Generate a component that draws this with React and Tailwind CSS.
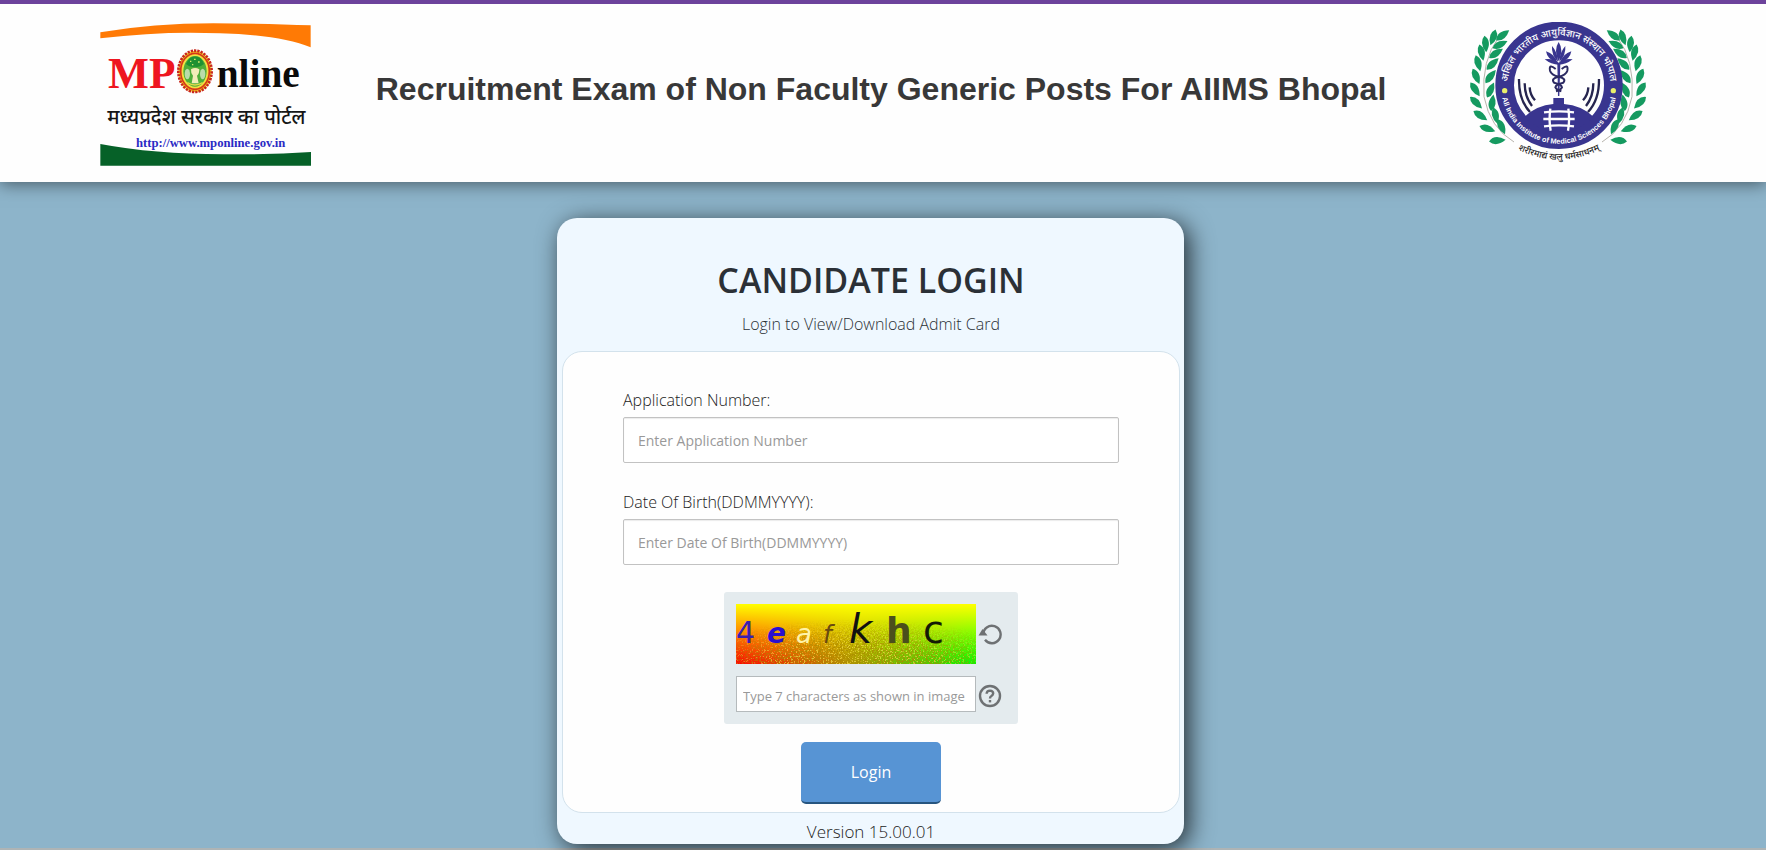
const DEVA = '"Noto Sans Devanagari", "Lohit Devanagari", "Noto Sans", sans-serif';

// x, y, rotation of each leaf on the left branch; the right one is mirrored
const LEAVES = [
  [188, 106, -38], [159, 112, 108], [180, 134, -26], [136, 132, 84], [168, 160, -34],
  [124, 158, 76], [158, 192, -44], [114, 190, 74], [152, 230, -52], [108, 229, 66],
  [152, 270, -66], [105, 268, 56], [157, 308, -82], [108, 308, 44], [166, 347, 76],
  [121, 347, 34], [184, 380, 64], [142, 386, 18], [172, 422, -6],
];

function Branch() {
  return (
    <g>
      <path d="M222 426 Q150 384 132 290 Q124 180 176 112" fill="none" stroke="#a8a39a" strokeWidth="2.5" />
      {LEAVES.map(([x, y, r]) => (
        <path key={`${x}-${y}`} d="M-25 0 Q-6 -22 25 0 Q-6 20 -25 0Z" fill="#159a60" transform={`translate(${x} ${y}) rotate(${r})`} />
      ))}
    </g>
  );
}

function MpOnlineLogo() {
  return (
    <svg viewBox="60 66 633 432" className="h-[144px] w-[211px]" role="img" aria-label="MPOnline">
      <path d="M61 97 Q220 70 400 70 Q560 70 692 76 V142 Q600 104 420 100 Q250 92 61 115Z" fill="#ff7a05" />
      <path d="M61 432 Q220 462 430 463 Q570 464 693 456 V497 H61Z" fill="#066128" />
      <text x="84" y="265" fontSize="130" fontWeight="700" fill="#ee1620" fontFamily='"Liberation Serif", serif'>MP</text>
      <text x="410" y="261" fontSize="118" fontWeight="700" fill="#0a0a0a" fontFamily='"Liberation Serif", serif'>nline</text>
      <ellipse cx="345" cy="214" rx="50" ry="62" fill="#f4d21f" stroke="#c9281c" strokeWidth="8" strokeDasharray="7 3" />
      <ellipse cx="345" cy="214" rx="43" ry="54" fill="none" stroke="#d5351d" strokeWidth="5" />
      <ellipse cx="345" cy="214" rx="37" ry="48" fill="#4fae3a" stroke="#f2e04c" strokeWidth="4" />
      <path d="M318 192 Q330 168 345 170 Q362 168 372 192 Q358 204 345 200 Q330 204 318 192Z" fill="#1f9132" />
      <path d="M330 184 h4 M342 178 h5 M354 186 h5 M336 194 h4" stroke="#d6e86a" strokeWidth="4" />
      <ellipse cx="322" cy="222" rx="8" ry="16" fill="#b9dcab" />
      <ellipse cx="368" cy="222" rx="8" ry="16" fill="#b9dcab" />
      <path d="M333 208 Q345 200 358 208 Q358 222 351 227 L356 250 H335 L339 227 Q332 220 333 208Z" fill="#f3ecb8" />
      <path d="M322 248 Q345 262 368 248" fill="none" stroke="#e0d94a" strokeWidth="4" />
      <text x="379" y="371" textAnchor="middle" fontSize="60" fontWeight="500" fill="#161616" fontFamily={DEVA}>मध्यप्रदेश सरकार का पोर्टल</text>
      <text x="392" y="441" textAnchor="middle" fontSize="38" fontWeight="700" fill="#2a2ac4" fontFamily='"Liberation Serif", serif'>http://www.mponline.gov.in</text>
    </svg>
  );
}

function AiimsLogo() {
  return (
    <svg viewBox="33 66 645 435" className="h-[145px] w-[215px]" role="img" aria-label="AIIMS Bhopal">
      <defs>
        <path id="ring-top" d="M202 262 A155 155 0 0 1 512 262" />
        <path id="ring-bottom" d="M184 276 A174 174 0 0 0 530 276" />
        <path id="motto" d="M220 442 Q357 516 494 442" />
      </defs>
      <Branch />
      <g transform="translate(708 0) scale(-1 1)">
        <Branch />
      </g>
      <circle cx="357" cy="256" r="163" fill="#fefefe" stroke="#39358f" strokeWidth="56" />
      <path d="M254 350 Q290 316 340 312 V294 H372 V312 Q424 316 460 350 Q420 395 357 395 Q294 395 254 350Z" fill="#39358f" />
      <g fill="none" stroke="#fefefe" strokeWidth="7">
        <path d="M331 326 Q326 360 332 392 M385 326 Q390 360 384 392" />
        <path d="M312 337 Q357 331 402 337 M310 357 H404 M312 379 Q357 373 402 379" />
      </g>
      <g fill="none" stroke="#26254f" strokeWidth="7">
        <path d="M237 237 Q236 300 270 336 M254 250 Q254 290 276 318 M269 262 Q270 284 285 301" />
        <path d="M477 237 Q478 300 444 336 M460 250 Q460 290 438 318 M445 262 Q444 284 429 301" />
      </g>
      <g fill="#39358f">
        <path d="M356 126 Q372 150 356 184 Q340 150 356 126Z" />
        <path d="M336 138 Q354 158 354 186 Q334 166 336 138Z M376 138 Q358 158 358 186 Q378 166 376 138Z" />
        <path d="M318 154 Q344 162 352 188 Q322 180 318 154Z M394 154 Q368 162 360 188 Q390 180 394 154Z" />
        <path d="M314 178 Q338 174 356 188 Q374 174 398 178 Q378 194 356 194 Q334 194 314 178Z" />
        <path d="M352 192 H361 L358 288 H354Z" />
      </g>
      <g fill="none" stroke="#2c2a62" strokeWidth="6">
        <path d="M347 207 Q326 190 330 212 Q334 226 357 230 Q380 236 370 248 Q348 252 346 262 Q350 270 364 274" />
        <path d="M365 207 Q386 190 382 212 Q378 226 355 230 Q332 236 342 248 Q364 252 366 262 Q362 270 348 274" />
      </g>
      <g fill="#fefefe">
        <text fontSize="29" fontWeight="500" fontFamily={DEVA} textAnchor="middle">
          <textPath href="#ring-top" startOffset="50%">अखिल भारतीय आयुर्विज्ञान संस्थान भोपाल</textPath>
        </text>
        <text fontSize="22" fontWeight="700" fontFamily='"Liberation Sans", sans-serif' textAnchor="middle">
          <textPath href="#ring-bottom" startOffset="50%">All India Institute of Medical Sciences Bhopal</textPath>
        </text>
      </g>
      <circle cx="194" cy="272" r="8" fill="#e9ef6b" />
      <circle cx="520" cy="272" r="8" fill="#e9ef6b" />
      <text fontSize="27" fontWeight="500" fill="#222" fontFamily={DEVA} textAnchor="middle">
        <textPath href="#motto" startOffset="50%">शरीरमाद्यं खलु धर्मसाधनम्</textPath>
      </text>
    </svg>
  );
}

function CaptchaImage() {
  return (
    <svg viewBox="0 0 240 60" className="h-[60px] w-[240px]" role="img" aria-label="Captcha">
      <defs>
        <linearGradient id="hue">
          <stop offset="0" stopColor="#ff0000" />
          <stop offset="0.14" stopColor="#f02800" />
          <stop offset="0.5" stopColor="#a89a00" />
          <stop offset="0.85" stopColor="#38d800" />
          <stop offset="1" stopColor="#00ff00" />
        </linearGradient>
        <linearGradient id="glow" x1="0" y1="0" x2="0" y2="1">
          <stop offset="0" stopColor="#ffff00" />
          <stop offset="1" stopColor="#ffff00" stopOpacity="0" />
        </linearGradient>
        <radialGradient id="spread" cx="0.5" cy="1" r="0.75">
          <stop offset="0.4" stopColor="#fff" />
          <stop offset="1" stopColor="#000" />
        </radialGradient>
        <mask id="grainArea">
          <rect width="240" height="60" fill="url(#spread)" />
        </mask>
        <filter id="grain" x="0" y="0" width="1" height="1">
          <feTurbulence type="fractalNoise" baseFrequency="0.63" numOctaves="3" seed="4" />
          <feColorMatrix values="0 0 0 0 0.4  0 0 0 0 0.25  0 0 0 0 0  9 0 0 0 -4.2" />
        </filter>
        <filter id="sparkle" x="0" y="0" width="1" height="1">
          <feTurbulence type="fractalNoise" baseFrequency="0.63" numOctaves="3" seed="11" />
          <feColorMatrix values="0 0 0 0 1  0 0 0 0 0.85  0 0 0 0 0.1  0 9 0 0 -5.2" />
        </filter>
      </defs>
      <rect width="240" height="60" fill="url(#hue)" />
      <rect width="240" height="60" fill="url(#glow)" />
      <g mask="url(#grainArea)">
        <rect width="240" height="60" filter="url(#grain)" opacity="0.7" />
        <rect width="240" height="60" filter="url(#sparkle)" opacity="0.6" />
      </g>
      <g fontFamily='"DejaVu Sans", sans-serif'>
        <text x="0" y="39" fontSize="30" fill="#3a1fb0">4</text>
        <text x="31" y="39" fontSize="28" fontWeight="700" fontStyle="italic" fill="#2a0fd0">e</text>
        <text x="60" y="39" fontSize="26" fontStyle="italic" fill="#fff3a8">a</text>
        <text x="87" y="39" fontSize="25" fontStyle="italic" fill="#6a4a10">f</text>
        <text x="113" y="39" fontSize="40" fontStyle="italic" fill="#111">k</text>
        <text x="150" y="39" fontSize="36" fontWeight="700" fill="#4b4f1c">h</text>
        <text x="187" y="39" fontSize="38" fill="#131a05">c</text>
      </g>
    </svg>
  );
}

function Field({ id, label, placeholder }) {
  return (
    <div className="flex flex-col gap-[5px]">
      <label htmlFor={id} className="text-base leading-6 font-light text-[#222]">{label}</label>
      <input
        id={id}
        placeholder={placeholder}
        className="h-[46px] w-full rounded-xs border border-[#c2c2c2] bg-white px-[14px] text-sm text-[#333] shadow-[inset_0_1px_1px_rgba(0,0,0,0.08)] outline-none placeholder:text-[#999]"
      />
    </div>
  );
}

export default function App() {
  return (
    <div className="flex min-h-screen flex-col border-b-2 border-[#aeb4b5] bg-[#8db4ca] font-['Open_Sans',sans-serif]">
      <header className="flex items-start justify-between border-t-4 border-[#6d439c] bg-[#fefefe] px-[100px] pt-[18px] pb-[15px] shadow-[0_2px_16px_rgba(0,0,0,0.5)]">
        <MpOnlineLogo />
        <h1 className="pt-[47px] font-['Liberation_Sans',sans-serif] text-[32px] leading-10 font-bold text-[#383838]">
          Recruitment Exam of Non Faculty Generic Posts For AIIMS Bhopal
        </h1>
        <AiimsLogo />
      </header>
      <main className="flex justify-center pt-9 pr-[25px]">
        <section className="w-[627px] rounded-[20px] bg-[#eff8ff] pr-1 pl-[5px] shadow-[5px_5px_25px_rgba(0,0,0,0.75)]">
          <div className="pt-10 pb-[15px] text-center text-[#2b3036]">
            <h2 className="text-[34px] leading-[44px] font-semibold">CANDIDATE LOGIN</h2>
            <p className="mt-[10px] text-base leading-6 font-light">Login to View/Download Admit Card</p>
          </div>
          <form className="flex flex-col rounded-[20px] border border-[#d3e2ec] bg-[#fefefe] px-[60px] pt-9 pb-2">
            <div className="flex flex-col gap-[27px]">
              <Field id="application" label="Application Number:" placeholder="Enter Application Number" />
              <Field id="dob" label="Date Of Birth(DDMMYYYY):" placeholder="Enter Date Of Birth(DDMMYYYY)" />
              <div className="flex w-[294px] flex-col gap-3 self-center rounded-[3px] bg-[#e4ebee] p-3">
                <div className="flex items-center gap-[2px]">
                  <CaptchaImage />
                  <button type="button" aria-label="Reload captcha">
                    <svg viewBox="0 0 24 24" className="size-6" fill="none" stroke="#6e7173" strokeWidth="2.4">
                      <path d="M5.2 12.5 A8.7 8.7 0 1 1 7 17.8" />
                      <path d="M0.5 13.5 L4.5 7 L9.5 13.5Z" fill="#6e7173" stroke="none" />
                    </svg>
                  </button>
                </div>
                <div className="flex items-end gap-[2px]">
                  <input
                    aria-label="Captcha text"
                    placeholder="Type 7 characters as shown in image"
                    className="h-9 w-[240px] border border-[#b5babc] bg-white px-[6px] pt-1 text-[13px] outline-none placeholder:text-[#999]"
                  />
                  <button type="button" aria-label="Help" className="pb-1">
                    <svg viewBox="0 0 24 24" className="size-6" fill="none" stroke="#6e7173" strokeWidth="2.4">
                      <circle cx="12" cy="12" r="10" />
                      <path d="M8.6 9.8 Q8.8 6.6 12 6.6 Q15.2 6.8 15.2 9.4 Q15 11 13.4 12 Q12 12.8 12 14.6" />
                      <path d="M12 16 V18.4" />
                    </svg>
                  </button>
                </div>
              </div>
            </div>
            <button type="submit" className="mt-[18px] h-[62px] w-[140px] self-center rounded-[5px] border-b-2 border-[#27557f] bg-[#5794d4] text-base text-white">
              Login
            </button>
          </form>
          <p className="pt-[7px] text-center text-[17px] leading-6 font-light text-[#222]">Version 15.00.01</p>
        </section>
      </main>
    </div>
  );
}
